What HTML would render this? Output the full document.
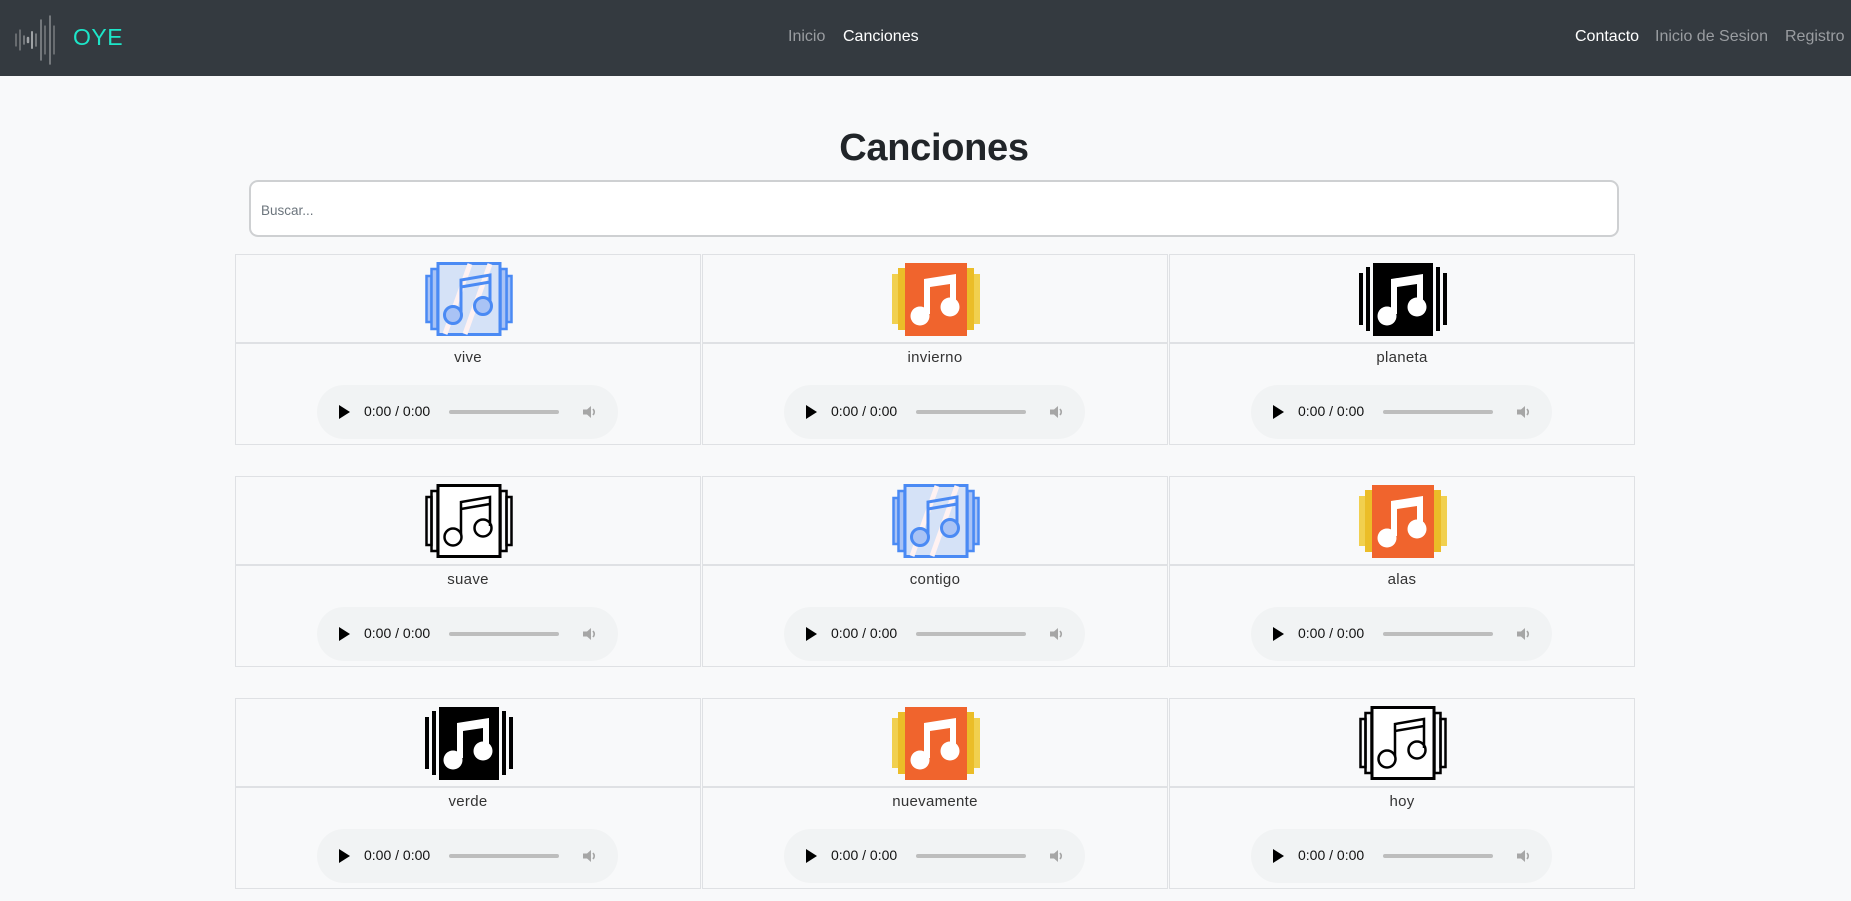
<!DOCTYPE html>
<html><head><meta charset="utf-8">
<style>
*{box-sizing:border-box;margin:0;padding:0}
body{width:1851px;height:901px;overflow:hidden;background:#f8f9fa;font-family:"Liberation Sans",Arial,sans-serif;position:relative}
nav{position:absolute;left:0;top:0;width:1851px;height:76px;background:#343a40}
.nl{position:absolute;top:28px;font-size:16px;color:#9a9da1}
.nl.a{color:#fff}
h1{position:absolute;left:0;width:1868px;text-align:center;top:127px;font-size:38px;font-weight:bold;color:#212529;letter-spacing:-0.3px}
.search{position:absolute;left:249px;top:180px;width:1370px;height:57px;border:2px solid #ced0d2;border-radius:9px;background:#fff;font-size:13.5px;color:#6c757d;padding:21px 0 0 10px}
.card{position:absolute;width:466px;height:191px;border:1px solid #dfe1e4;background:#f8f9fa}
.img{height:89px;border-bottom:2px solid #dfe1e4;position:relative}
.img svg{position:absolute;left:189px;top:7px}
.name{text-align:center;font-size:15px;color:#333;margin-top:5px;letter-spacing:0.3px}
.aud{position:absolute;left:81px;top:130px;width:301px;height:54px;border-radius:27px;background:#f1f3f4}
.aud .pl{position:absolute;left:22px;top:20px;width:0;height:0;border-left:11px solid #000;border-top:7px solid transparent;border-bottom:7px solid transparent}
.aud .t{position:absolute;left:47px;top:18px;font-size:14px;color:#111}
.aud .bar{position:absolute;left:132px;top:25px;width:110px;height:4px;border-radius:2px;background:#bdbdbd}
.aud svg{position:absolute;left:264px;top:18px}
</style></head><body>
<svg width="0" height="0" style="position:absolute">
<defs>
<symbol id="blue" viewBox="0 0 88 75">
<rect x="1.5" y="14" width="5" height="46" fill="#a9c3f5" stroke="#4a8af4" stroke-width="2.5"/>
<rect x="81.5" y="14" width="5" height="46" fill="#a9c3f5" stroke="#4a8af4" stroke-width="2.5"/>
<rect x="6.5" y="7" width="6" height="60" fill="#a9c3f5" stroke="#4a8af4" stroke-width="2.5"/>
<rect x="75.5" y="7" width="6" height="60" fill="#a9c3f5" stroke="#4a8af4" stroke-width="2.5"/>
<rect x="13" y="1.5" width="62" height="71" fill="#d5e2f7" stroke="#4a8af4" stroke-width="3"/>
<path d="M20 72 L45 2 M40 72 L65 2" stroke="#fff2f2" stroke-width="5"/>
<path d="M36 50 V18 L65 13 V42 M36 25 L65 20" fill="none" stroke="#4a8af4" stroke-width="3"/>
<circle cx="28" cy="53" r="8.5" fill="#a9c3f5" stroke="#4a8af4" stroke-width="3"/>
<circle cx="58" cy="44" r="8.5" fill="#a9c3f5" stroke="#4a8af4" stroke-width="3"/>
</symbol>
<symbol id="orange" viewBox="0 0 88 75">
<rect x="0" y="12" width="6" height="50" fill="#f1d04f"/>
<rect x="82" y="12" width="6" height="50" fill="#f1d04f"/>
<rect x="6" y="6" width="7" height="62" fill="#ebbd28"/>
<rect x="75" y="6" width="7" height="62" fill="#ebbd28"/>
<rect x="13" y="1" width="62" height="73" fill="#f0642d"/>
<path d="M32 52 V17 L64 12 V44 L58 44 V22 L38 25 V52Z" fill="#fff"/>
<circle cx="28" cy="54" r="9.5" fill="#fff"/>
<circle cx="58" cy="45" r="9.5" fill="#fff"/>
</symbol>
<symbol id="black" viewBox="0 0 88 75">
<rect x="0" y="11" width="4" height="52" fill="#000"/>
<rect x="84" y="11" width="4" height="52" fill="#000"/>
<rect x="7" y="5" width="4" height="64" fill="#000"/>
<rect x="77" y="5" width="4" height="64" fill="#000"/>
<rect x="14" y="1" width="60" height="73" fill="#000"/>
<path d="M32 52 V17 L64 12 V44 L58 44 V22 L38 25 V52Z" fill="#fff"/>
<circle cx="28" cy="54" r="9.5" fill="#fff"/>
<circle cx="58" cy="45" r="9.5" fill="#fff"/>
</symbol>
<symbol id="outline" viewBox="0 0 88 75">
<rect x="1.5" y="13" width="5" height="48" fill="none" stroke="#000" stroke-width="2.5"/>
<rect x="81.5" y="13" width="5" height="48" fill="none" stroke="#000" stroke-width="2.5"/>
<rect x="6.5" y="7" width="6" height="60" fill="none" stroke="#000" stroke-width="2.5"/>
<rect x="75.5" y="7" width="6" height="60" fill="none" stroke="#000" stroke-width="2.5"/>
<rect x="13" y="1.5" width="62" height="71" fill="#fff" stroke="#000" stroke-width="3"/>
<path d="M36 50 V18 L65 13 V42 M36 25 L65 20" fill="none" stroke="#000" stroke-width="2.5"/>
<circle cx="28" cy="53" r="8.5" fill="none" stroke="#000" stroke-width="2.5"/>
<circle cx="58" cy="44" r="8.5" fill="none" stroke="#000" stroke-width="2.5"/>
</symbol>
<symbol id="vol" viewBox="0 0 18 18">
<path d="M2 6.5 H6 L10 3 V15 L6 11.5 H2Z" fill="#a6a6a6"/>
<path d="M12 6 Q14.5 9 12 12" fill="none" stroke="#a6a6a6" stroke-width="1.6"/>
</symbol>
</defs>
</svg>

<nav>
<svg width="60" height="60" style="position:absolute;left:14px;top:10px" viewBox="0 0 60 60">
<g stroke="#8a8d90" stroke-linecap="round">
<line x1="2" y1="24" x2="2" y2="36" stroke-width="1.2"/>
<line x1="6" y1="20" x2="6" y2="40" stroke-width="1.2"/>
<line x1="10" y1="26" x2="10" y2="34" stroke-width="1.5"/>
<line x1="14" y1="28" x2="14" y2="32" stroke-width="2.5" stroke="#9fa2a5"/>
<line x1="18" y1="22" x2="18" y2="38" stroke-width="2" stroke="#9fa2a5"/>
<line x1="22" y1="24" x2="22" y2="36" stroke-width="1.5"/>
<line x1="27" y1="10" x2="27" y2="50" stroke-width="1.5"/>
<line x1="31" y1="16" x2="31" y2="44" stroke-width="1.2"/>
<line x1="36" y1="6" x2="36" y2="54" stroke-width="1.5"/>
<line x1="40" y1="16" x2="40" y2="44" stroke-width="1.2"/>
</g></svg>
<div style="position:absolute;left:73px;top:24px;font-size:23px;color:#1de5c8;letter-spacing:0.5px">OYE</div>
<div class="nl" style="left:788px">Inicio</div>
<div class="nl a" style="left:843px">Canciones</div>
<div class="nl a" style="left:1575px">Contacto</div>
<div class="nl" style="left:1655px">Inicio de Sesion</div>
<div class="nl" style="left:1785px">Registro</div>
</nav>

<h1>Canciones</h1>
<div class="search">Buscar...</div>

<div class="card" style="left:235px;top:254px"><div class="img"><svg width="88" height="75"><use href="#blue"/></svg></div><div class="name">vive</div><div class="aud"><div class="pl"></div><div class="t">0:00 / 0:00</div><div class="bar"></div><svg width="18" height="18"><use href="#vol"/></svg></div></div>
<div class="card" style="left:702px;top:254px"><div class="img"><svg width="88" height="75"><use href="#orange"/></svg></div><div class="name">invierno</div><div class="aud"><div class="pl"></div><div class="t">0:00 / 0:00</div><div class="bar"></div><svg width="18" height="18"><use href="#vol"/></svg></div></div>
<div class="card" style="left:1169px;top:254px"><div class="img"><svg width="88" height="75"><use href="#black"/></svg></div><div class="name">planeta</div><div class="aud"><div class="pl"></div><div class="t">0:00 / 0:00</div><div class="bar"></div><svg width="18" height="18"><use href="#vol"/></svg></div></div>
<div class="card" style="left:235px;top:476px"><div class="img"><svg width="88" height="75"><use href="#outline"/></svg></div><div class="name">suave</div><div class="aud"><div class="pl"></div><div class="t">0:00 / 0:00</div><div class="bar"></div><svg width="18" height="18"><use href="#vol"/></svg></div></div>
<div class="card" style="left:702px;top:476px"><div class="img"><svg width="88" height="75"><use href="#blue"/></svg></div><div class="name">contigo</div><div class="aud"><div class="pl"></div><div class="t">0:00 / 0:00</div><div class="bar"></div><svg width="18" height="18"><use href="#vol"/></svg></div></div>
<div class="card" style="left:1169px;top:476px"><div class="img"><svg width="88" height="75"><use href="#orange"/></svg></div><div class="name">alas</div><div class="aud"><div class="pl"></div><div class="t">0:00 / 0:00</div><div class="bar"></div><svg width="18" height="18"><use href="#vol"/></svg></div></div>
<div class="card" style="left:235px;top:698px"><div class="img"><svg width="88" height="75"><use href="#black"/></svg></div><div class="name">verde</div><div class="aud"><div class="pl"></div><div class="t">0:00 / 0:00</div><div class="bar"></div><svg width="18" height="18"><use href="#vol"/></svg></div></div>
<div class="card" style="left:702px;top:698px"><div class="img"><svg width="88" height="75"><use href="#orange"/></svg></div><div class="name">nuevamente</div><div class="aud"><div class="pl"></div><div class="t">0:00 / 0:00</div><div class="bar"></div><svg width="18" height="18"><use href="#vol"/></svg></div></div>
<div class="card" style="left:1169px;top:698px"><div class="img"><svg width="88" height="75"><use href="#outline"/></svg></div><div class="name">hoy</div><div class="aud"><div class="pl"></div><div class="t">0:00 / 0:00</div><div class="bar"></div><svg width="18" height="18"><use href="#vol"/></svg></div></div>
</body></html>
